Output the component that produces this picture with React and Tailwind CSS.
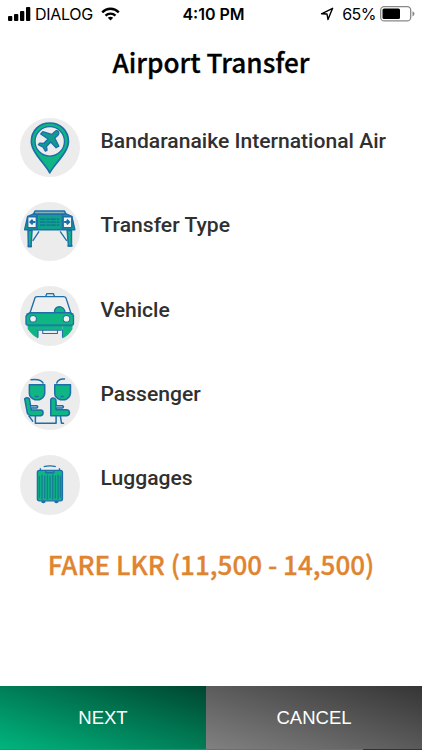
import React from "react";

const BLUE = "#1c6fa9";
const GREEN = "#0fb583";

const AirportIcon = () => (
  <svg viewBox="30 23 178 178" className="w-full h-full" fill="none">
    <path
      d="M119 187C107 162 64 126 64 93C64 60 88 38 119 38C150 38 175 60 175 93C175 126 131 162 119 187Z"
      fill={GREEN}
      stroke={BLUE}
      strokeWidth="5"
      strokeLinejoin="round"
    />
    <circle cx="119" cy="93" r="44" fill="#ececec" stroke={BLUE} strokeWidth="4" />
    <path
      d="M143 62C148 66 147 71 142 76L134 83L146 107L138 112L122 95L109 108L111 119L106 122L99 110L85 103L89 98L101 99L114 86L92 71L98 64L125 72L134 64C138 60 141 60 143 62Z"
      fill="#119a91"
      stroke={BLUE}
      strokeWidth="4"
      strokeLinejoin="round"
    />
  </svg>
);

const TransferIcon = () => (
  <svg viewBox="30 20 178 178" className="w-full h-full" fill="none">
    <g stroke={BLUE} strokeWidth="4.5" strokeLinejoin="round">
      <path d="M75 47H163L168 57H70Z" fill="#86b4b4" />
      <path d="M54 105H66L63 153H55ZM171 105H184V151H175Z" fill={GREEN} />
      <path d="M53 63L68 57H171L185 63L194 103H44Z" fill="#10a08c" />
      <path d="M53 64H79V97H53ZM159 64H185V97H159Z" fill="#f4f4f4" />
      <path d="M81 59V104M157 59V104" />
      <path d="M87 108L68 136M150 108L170 136" strokeWidth="4" />
      <path d="M53 153H66M172 151H187" strokeWidth="5" />
    </g>
    <path
      d="M76 80H62M68 73L61 80L68 87M162 80H177M170 73L177 80L170 87"
      stroke={BLUE}
      strokeWidth="6"
    />
    <path
      d="M90 71H147M90 80H147M90 89H147"
      stroke="#0d7f94"
      strokeWidth="5"
      strokeDasharray="16 3 10 2"
    />
  </svg>
);

const VehicleIcon = () => (
  <svg viewBox="30 18 178 178" className="w-full h-full" fill="none">
    <g stroke={BLUE} strokeWidth="4" strokeLinejoin="round">
      <path d="M107 49L110 41H130L133 49" fill="#dfe7e8" />
      <path d="M75 53Q77 50 82 50H160Q166 50 168 55L182 98H60Z" fill="#efefef" />
      <path d="M133 98C131 74 163 74 165 98Z" fill={GREEN} />
      <path
        d="M60 98H179L190 106V130Q190 135 184 135H55Q48 135 48 130V108Z"
        fill={GREEN}
      />
      <path d="M49 103L60 98M181 98L190 103" />
    </g>
    <path d="M53 137H84V175Q66 166 53 147ZM157 137H187V147Q177 166 157 175Z" fill={GREEN} />
    <path d="M84 137H157V149H84Z" fill={GREEN} />
    <path
      d="M53 137H187M84 148V172M157 148V172M86 150H155M98 152V160H142V152"
      stroke={BLUE}
      strokeWidth="3"
    />
    <circle cx="69" cy="116" r="10" fill="#eef3f0" stroke={BLUE} strokeWidth="3" />
    <circle cx="169" cy="116" r="10" fill="#eef3f0" stroke={BLUE} strokeWidth="3" />
  </svg>
);

const PassengerIcon = () => (
  <svg viewBox="30 16 178 178" className="w-full h-full" fill="none">
    <g stroke={BLUE} strokeWidth="4.5" strokeLinejoin="round" strokeLinecap="round">
      <path d="M58 57H104V83Q102 97 88 102H75Q58 95 58 83Z" fill={GREEN} />
      <path d="M63 42Q91 38 99 52" />
      <path d="M134 57H181V83Q179 97 165 102H151Q134 95 134 83Z" fill={GREEN} />
      <path d="M163 40Q145 38 140 52" />
      <path
        d="M44 99Q51 93 58 99L64 133H93Q99 134 99 141Q99 149 92 150H62Q54 149 52 142Z"
        fill={GREEN}
      />
      <path
        d="M122 101Q125 95 134 98Q139 101 138 109V132H170Q178 134 178 141Q178 149 170 150H122Z"
        fill={GREEN}
      />
      <path d="M63 120H80Q86 123 80 127H64M139 120H157Q163 123 157 127H139" fill="#cce3e7" />
      <path d="M57 151L68 166M76 152V172H138V152M151 152L154 172H160M84 92H76M159 92H153" />
    </g>
  </svg>
);

const LuggageIcon = () => (
  <svg viewBox="30 14 178 178" className="w-full h-full" fill="none">
    <path d="M101 49Q120 44 137 49" stroke={BLUE} strokeWidth="4" />
    <path
      d="M94 151H106V156Q100 160 94 156ZM133 151H145V156Q139 160 133 156Z"
      fill={BLUE}
    />
    <rect
      x="82"
      y="60"
      width="75"
      height="91"
      rx="6"
      fill={GREEN}
      stroke={BLUE}
      strokeWidth="4"
    />
    <path d="M91 54V61M148 54V61M107 61V67H131V61" stroke={BLUE} strokeWidth="4" />
    <path
      d="M88 76V142M96 73V147M104 76V144M112 73V147M120 76V144M128 73V147M136 76V144M144 73V147M151 76V142"
      stroke="#157d98"
      strokeWidth="4"
    />
  </svg>
);

const options = [
  { label: "Bandaranaike International Air", Icon: AirportIcon },
  { label: "Transfer Type", Icon: TransferIcon },
  { label: "Vehicle", Icon: VehicleIcon },
  { label: "Passenger", Icon: PassengerIcon },
  { label: "Luggages", Icon: LuggageIcon },
];

const StatusBar = () => (
  <div className="flex items-center justify-between h-7 pl-2 pr-[7px] text-black font-['Inter',sans-serif] text-[16px] leading-7">
    <div className="flex items-center flex-1">
      <svg width="23" height="14" viewBox="0 0 23 14" className="mr-1">
        <rect x="0" y="9" width="4.3" height="5" rx="1" />
        <rect x="6" y="7" width="4.3" height="7" rx="1" />
        <rect x="12" y="4" width="4.3" height="10" rx="1" />
        <rect x="18" y="0" width="4.3" height="14" rx="1" />
      </svg>
      <span className="tracking-[-0.3px]">DIALOG</span>
      <svg width="19" height="14" viewBox="0 0 19 14" fill="none" className="ml-2">
        <path d="M1.2 5.3C6 .6 13 .6 17.8 5.3" stroke="black" strokeWidth="2.4" />
        <path d="M4.5 8.6C7.3 5.9 11.7 5.9 14.5 8.6" stroke="black" strokeWidth="2.3" />
        <path d="M6.8 10.8Q9.5 8.5 12.2 10.8L9.5 13.5Z" fill="black" />
      </svg>
    </div>
    <span className="pl-1 font-semibold">4:10 PM</span>
    <div className="flex items-center justify-end flex-1">
      <svg width="14" height="14" viewBox="0 0 14 14" fill="none" className="mr-2">
        <path
          d="M1.5 6.8L12.6 1.3L8 12.6L7 7Z"
          stroke="black"
          strokeWidth="1.4"
          strokeLinejoin="round"
        />
      </svg>
      <span className="tracking-[-0.5px]">65%</span>
      <svg width="35" height="16" viewBox="0 0 35 16" fill="none" className="ml-1">
        <rect x=".7" y=".7" width="30" height="14.2" rx="3.5" stroke="#888" strokeWidth="1.3" />
        <rect x="2.5" y="2.6" width="17.5" height="10.5" rx="1.5" fill="black" />
        <path d="M32.5 5.2Q34.5 6 34.5 7.8T32.5 10.5Z" fill="#888" />
      </svg>
    </div>
  </div>
);

const App = () => {
  return (
    <div className="flex flex-col w-full h-[750px] bg-white overflow-hidden">
      <StatusBar />
      <h1 className="mt-[14px] h-10 text-center text-[26.2px] leading-10 font-medium text-black [-webkit-text-stroke:0.3px] font-['Noto_Sans_CJK_JP',sans-serif]">
        Airport Transfer
      </h1>
      <ul className="flex flex-col gap-[24.9px] mt-[35.6px] pl-5">
        {options.map(({ label, Icon }) => (
          <li key={label} className="flex items-center h-[59.5px]">
            <div className="w-[59.5px] h-[59.5px] rounded-full bg-[#ececec] overflow-hidden shrink-0">
              <Icon />
            </div>
            <span className="ml-[21px] pb-[13px] text-[21.1px] leading-7 font-medium text-[#303030] whitespace-nowrap font-['Roboto',sans-serif]">
              {label}
            </span>
          </li>
        ))}
      </ul>
      <p className="mt-[29.4px] text-center text-[26.05px] leading-10 font-medium text-[#e08430] [-webkit-text-stroke:0.3px] font-['Noto_Sans_CJK_JP',sans-serif]">
        FARE LKR (11,500 - 14,500)
      </p>
      <div className="flex h-[63px] mt-auto text-white text-[18.5px] font-['Liberation_Sans',sans-serif]">
        <button className="w-[206px] bg-[linear-gradient(17deg,#00b57e_0%,#00462f_100%)]">
          NEXT
        </button>
        <button className="flex-1 bg-[linear-gradient(17deg,#818181_0%,#353535_100%)]">
          CANCEL
        </button>
      </div>
      <div className="flex h-px">
        <div className="w-[363px] bg-[#3f8573]" />
        <div className="flex-1 bg-[#333333]" />
      </div>
    </div>
  );
};

export default App;
